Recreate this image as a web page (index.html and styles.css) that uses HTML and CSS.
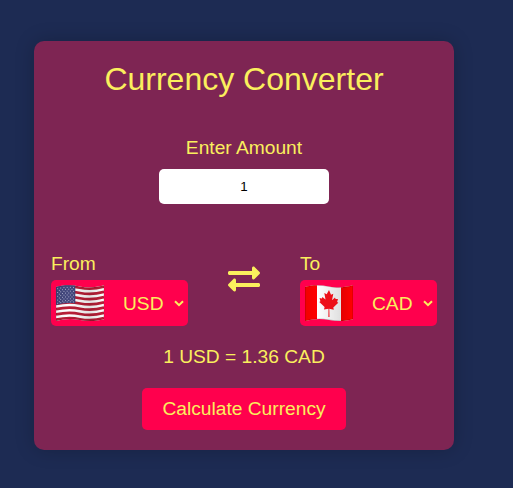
FILE: index.html
```html
<!DOCTYPE html>
<html lang="en">
<head>
<meta charset="utf-8">
<title>Currency Converter</title>
<link rel="stylesheet" href="styles.css">
</head>
<body>
<main class="card">
  <h1 class="title">Currency Converter</h1>
  <div class="amount">
    <label class="label" for="amount">Enter Amount</label>
    <input class="amount-input" id="amount" type="text" value="1">
  </div>
  <div class="currencies">
    <div class="currency">
      <span class="label">From</span>
      <div class="select">
        <svg class="flag" viewBox="0 0 48 37">
          <defs>
            <clipPath id="wave"><path d="M0 1.900C7 -.2 15 -.3 24 1.400S39 2.600 48 .3V34.200C39 36.400 32 36.400 24 34.900S8 33.700 0 36Z"/></clipPath>
            <linearGradient id="shade"><stop offset="0" stop-color="#000" stop-opacity=".06"/><stop offset=".25" stop-color="#000" stop-opacity="0"/><stop offset=".72" stop-color="#000" stop-opacity=".12"/><stop offset="1" stop-color="#000" stop-opacity="0"/></linearGradient>
          </defs>
          <g clip-path="url(#wave)">
            <path fill="#fff" d="M0 0h48v37H0z"/>
            <g fill="none" stroke="#b91e37" stroke-width="2.7">
              <path d="M0 3.200C8 1.400 16 1.100 24 2.700S39 4.100 48 1.600"/>
              <path d="M0 8.450C8 6.650 16 6.350 24 7.950S39 9.350 48 6.850"/>
              <path d="M0 13.700C8 11.900 16 11.600 24 13.200S39 14.600 48 12.100"/>
              <path d="M0 18.950C8 17.150 16 16.850 24 18.450S39 19.850 48 17.350"/>
              <path d="M0 24.200C8 22.400 16 22.100 24 23.700S39 25.100 48 22.600"/>
              <path d="M0 29.450C8 27.650 16 27.350 24 28.950S39 30.350 48 27.850"/>
              <path d="M0 34.700C8 32.900 16 32.600 24 34.200S39 35.600 48 33.100"/>
            </g>
            <path fill="#43477d" d="M0 0H19.300V18.500C13 17.500 6 18.500 0 20Z"/>
            <g fill="none" stroke="#c4c7dc" stroke-width="1" stroke-linecap="round" stroke-dasharray="0 3.200">
              <path d="M1.700 3.700Q9 1.800 18 2.600"/><path d="M3.300 5.400Q10 3.700 17 4.500"/>
              <path d="M1.700 7.500Q9 5.600 18 6.400"/><path d="M3.300 9.200Q10 7.500 17 8.300"/>
              <path d="M1.700 11.300Q9 9.400 18 10.200"/><path d="M3.300 13Q10 11.300 17 12.100"/>
              <path d="M1.700 15.100Q9 13.200 18 14"/><path d="M3.300 16.700Q10 15 17 15.800"/>
              <path d="M1.700 18.300Q9 16.400 18 17"/>
            </g>
            <path fill="url(#shade)" d="M0 0h48v37H0z"/>
            <path fill="none" stroke="#000" stroke-opacity=".2" d="M0 1.900C7 -.2 15 -.3 24 1.400S39 2.600 48 .3V34.200C39 36.400 32 36.400 24 34.900S8 33.700 0 36Z"/>
          </g>
        </svg>
        <span class="code">USD</span>
        <svg class="chevron" viewBox="0 0 10 7"><path d="M1 1.200l4 4 4-4"/></svg>
      </div>
    </div>
    <svg class="swap" viewBox="0 0 512 512"><path d="M0 168v-16c0-13.255 10.745-24 24-24h360V80c0-21.367 25.899-32.042 40.971-16.971l80 80c9.372 9.373 9.372 24.569 0 33.941l-80 80C409.956 271.982 384 261.456 384 240v-48H24c-13.255 0-24-10.745-24-24zm488 152H128v-48c0-21.314-25.862-32.080-40.971-16.971l-80 80c-9.372 9.373-9.372 24.569 0 33.941l80 80C102.057 463.997 128 453.437 128 432v-48h360c13.255 0 24-10.745 24-24v-16c0-13.255-10.745-24-24-24z"/></svg>
    <div class="currency">
      <span class="label">To</span>
      <div class="select">
        <svg class="flag" viewBox="0 0 48 37">
          <g clip-path="url(#wave)">
            <path fill="#fff" d="M0 0h48v37H0z"/>
            <path fill="#f00" d="M0 0h12v37H0zM36 0h12v37H36z"/>
            <path fill="url(#shade)" d="M0 0h48v37H0z"/>
            <path fill="#ed1018" d="M24 5l-2.300 4.200-2.400-1.200 1.200 6.500-3.100-2.600-.5 1.600-2.400-.4.900 3.200-1.100.8 5.300 5-.6 2.300 4.500-.7-.1 8.300h1.100l-.2-8.200 4.500.9-.5-2.200 5-4.700-1.200-.8.900-3.100-2.400.2-.6-1.500-3 2.700 1.300-6.500-2.300 1z"/>
            <path fill="none" stroke="#000" stroke-opacity=".22" d="M0 1.900C7 -.2 15 -.3 24 1.400S39 2.600 48 .3V34.200C39 36.400 32 36.400 24 34.900S8 33.700 0 36Z"/>
          </g>
        </svg>
        <span class="code">CAD</span>
        <svg class="chevron" viewBox="0 0 10 7"><path d="M1 1.200l4 4 4-4"/></svg>
      </div>
    </div>
  </div>
  <p class="result">1 USD = 1.36 CAD</p>
  <button class="button" type="button">Calculate Currency</button>
</main>
</body>
</html>
```
FILE: styles.css
```css
* {
  box-sizing: border-box;
  margin: 0;
}

body {
  min-height: 488px;
  padding: 41px 0 0 34px;
  overflow: hidden;
  background: #1d2b53;
  color: #faef5d;
  font-family: "Liberation Sans", Arial, sans-serif;
  font-size: 19.2px;
  line-height: 22px;
}

.card {
  display: flex;
  flex-direction: column;
  align-items: center;
  width: 420px;
  height: 409px;
  padding: 20px 17px;
  border-radius: 10px;
  background: #7e2553;
  box-shadow: 0 0 20px rgba(0, 0, 0, 0.2);
}

.title {
  font-size: 32px;
  font-weight: 400;
  line-height: 36px;
}

.amount {
  display: flex;
  flex-direction: column;
  align-items: center;
  gap: 10px;
  margin-top: 40px;
}

.amount-input {
  width: 170px;
  height: 35px;
  padding: 0;
  border: 0;
  border-radius: 5px;
  background: #fff;
  color: #000;
  font-family: inherit;
  font-size: 13.333px;
  text-align: center;
}

.currencies {
  display: flex;
  justify-content: space-between;
  width: 386px;
  margin-top: 49px;
}

.currency {
  display: flex;
  flex-direction: column;
  gap: 5px;
  width: 137px;
}

.select {
  display: flex;
  align-items: center;
  height: 46px;
  padding: 0 4px 0 5px;
  border-radius: 5px;
  background: #ff004d;
}

.flag {
  width: 48px;
  height: 37px;
}

.code {
  margin-left: 19px;
  padding-top: 2px;
}

.chevron {
  width: 10px;
  height: 7px;
  margin-left: auto;
  fill: none;
  stroke: #faef5d;
  stroke-width: 2;
}

.swap {
  width: 32px;
  height: 32px;
  margin-top: 10px;
  fill: #faef5d;
}

.result {
  margin-top: 20px;
}

.button {
  width: 204px;
  height: 42px;
  margin-top: 20px;
  padding: 0;
  border: 0;
  border-radius: 5px;
  background: #ff004d;
  color: #faef5d;
  font: inherit;
}
```
